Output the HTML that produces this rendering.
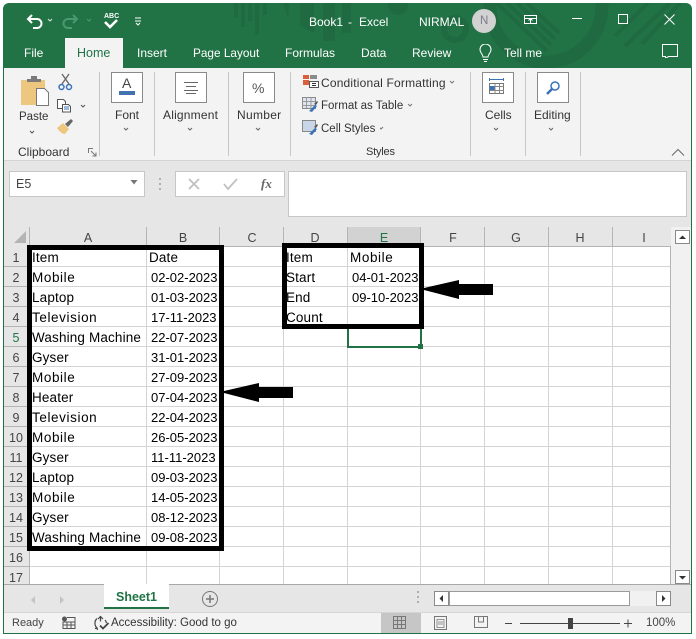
<!DOCTYPE html>
<html><head><meta charset="utf-8"><style>
html,body{margin:0;padding:0;background:#fff}
#r{position:relative;width:696px;height:639px;overflow:hidden;background:#fff;font-family:"Liberation Sans",sans-serif;font-size:12px;color:#333}
#r div,#r svg{position:absolute}
.t{white-space:nowrap;line-height:16px;height:16px}
.w{color:#fff}
.c{color:#000;font-size:13.5px;letter-spacing:.15px}
.d{color:#000;font-size:13px}
.m{letter-spacing:.6px}
.h{color:#444;font-size:12.5px;text-align:center;transform:translateX(-50%);line-height:16px;white-space:nowrap}
.b{background:#fff;border:1px solid #8a8a8a;box-sizing:border-box}
.s{width:1px;background:#c6c6c6;top:72px;height:84px}
</style></head><body><div id="r">

<div style="left:3px;top:3px;width:689px;height:631px;background:#217346;border-radius:6px 6px 6px 6px"></div>
<svg style="left:3px;top:3px" width="689" height="65" viewBox="3 3 689 65" fill="none">
<g fill="#1f6a41">
<rect x="234" y="3" width="4" height="15"/><rect x="241" y="3" width="4" height="24"/><rect x="248" y="3" width="4" height="18"/><rect x="255" y="3" width="4" height="32"/><rect x="263" y="3" width="4" height="12"/>
<path d="M283 3h6l-1 15zM300 3h14v30l-14-7z"/><rect x="323" y="3" width="12" height="38"/><rect x="342" y="3" width="9" height="30"/><circle cx="398" cy="5" r="10"/>
</g>
<g stroke="#1f6a41" fill="none">
<circle cx="455" cy="29" r="11" stroke-width="6"/><circle cx="546" cy="6" r="56" stroke-width="13"/>
<path d="M497 3l50 48M507 3l44 42M517 3l38 36M527 3l32 30M625 46l45-43M642 44l38-41M615 36l33-33" stroke-width="4"/>
</g>
</svg>

<!-- QAT -->
<svg style="left:22px;top:10px" width="130" height="24" viewBox="22 10 130 24" fill="none">
<path d="M28 19h9a4.500 4.500 0 0 1 0 9h-4M32 15l-4 4 4 4" stroke="#fff" stroke-width="2"/>
<path d="M48 19l2 2 2-2" stroke="#d7e6dd"/>
<path d="M77 19h-9a4.500 4.500 0 0 0 0 9h4M73 15l4 4-4 4" stroke="#4c9870" stroke-width="2"/>
<path d="M87 19l2 2 2-2" stroke="#4c9870"/>
<path d="M105 22l5 5 7-7" stroke="#fff" stroke-width="2.600"/>
<path d="M135 18h6M135 21h6M136 23l2 2 2-2" stroke="#fff"/>
</svg>
<div class="t w" style="left:104px;top:12px;font-size:7px;font-weight:bold;line-height:9px;height:9px">ABC</div>

<!-- Title -->
<div class="t w" style="left:309px;top:14px">Book1</div>
<div class="t w" style="left:348px;top:14px">-</div>
<div class="t w" style="left:359px;top:14px">Excel</div>
<div class="t w" style="left:419px;top:14px">NIRMAL</div>
<div style="left:472px;top:9px;width:24px;height:24px;border-radius:50%;background:#d2d2d2"></div>
<div class="t" style="left:480px;top:13px;color:#7a7a8a;font-size:11.5px">N</div>
<svg style="left:520px;top:12px" width="172" height="46" viewBox="520 12 172 46" fill="none" stroke="#fff">
<path d="M524.500 15.500h12v8h-12zM524.500 18.500h12M530.500 23v-4M528.500 20.500l2-2 2 2"/>
<path d="M572 18.500h10" stroke-width="1"/>
<rect x="618.500" y="14.500" width="9" height="9"/>
<path d="M664.500 14.500l10 10M674.500 14.500l-10 10"/>
<path d="M662.500 46.500h15v12h-9l-3 2v-2h-3z" transform="translate(0,-2)"/>
</svg>

<!-- Tabs -->
<div style="left:65px;top:38px;width:58px;height:30px;background:#f3f3f3"></div>
<div class="t w" style="left:24px;top:45px">File</div>
<div class="t" style="left:77px;top:45px;font-size:12.5px;color:#217346">Home</div>
<div class="t w" style="left:137px;top:45px">Insert</div>
<div class="t w" style="left:193px;top:45px;font-size:11.800px">Page Layout</div>
<div class="t w" style="left:285px;top:45px">Formulas</div>
<div class="t w" style="left:361px;top:45px">Data</div>
<div class="t w" style="left:412px;top:45px">Review</div>
<div class="t w" style="left:504px;top:45px">Tell me</div>
<svg style="left:476px;top:44px" width="18" height="20" viewBox="476 44 18 20" fill="none" stroke="#fff">
<path d="M483 57c0-3-3-4-3-7.500a5.500 5.500 0 0 1 11 0c0 3.500-3 4.500-3 7.500zM483 59.500h5M484 61.500h3"/>
</svg>

<!-- Ribbon -->
<div style="left:4px;top:68px;width:687px;height:92px;background:#f3f3f3"></div>
<div style="left:4px;top:160px;width:687px;height:1px;background:#d4d4d4"></div>
<div class="s" style="left:99px"></div><div class="s" style="left:154px"></div><div class="s" style="left:228px"></div><div class="s" style="left:290px"></div><div class="s" style="left:470px"></div><div class="s" style="left:525px"></div><div class="s" style="left:580px"></div>

<svg style="left:15px;top:72px" width="85" height="70" viewBox="15 72 85 70" fill="none">
<path d="M21 80h24v25H21z" fill="#edc77f"/>
<path d="M27 82v-3h4v-3h6v3h4v3z" fill="#7a7a7a"/>
<path d="M36.500 88.500h8l4 4v13h-12z" fill="#fff" stroke="#777"/>
<circle cx="61.500" cy="87" r="2.500" stroke="#3a73b8" stroke-width="1.500"/><circle cx="69" cy="87" r="2.500" stroke="#3a73b8" stroke-width="1.500"/>
<path d="M62 84l7-10M69 84l-7-10" stroke="#666" stroke-width="1.300"/>
<path d="M57.500 99.500h6l2 2v7h-8z" fill="#fff" stroke="#555"/><path d="M62.500 104.500h6l2 2v5.500h-8z" fill="#fff" stroke="#555"/><path d="M64 107h5M64 109h5" stroke="#3a73b8"/>
<path d="M57 128l6-5 6 6-4 5c-3 0-6-3-8-6z" fill="#edc77f"/><path d="M65 124l6-5 2 2-5 6z" fill="#666"/>
<path d="M81 105l2 2 2-2M30 131l2 2 2-2" stroke="#555"/>
</svg>
<div class="t" style="left:19px;top:109px;font-size:11.500px">Paste</div>
<div class="t" style="left:18px;top:144px">Clipboard</div>
<svg style="left:88px;top:148px" width="9" height="9" fill="none" stroke="#777"><path d="M.5 5V.5H5M3 3l5 5M8 4.500V8H4.500"/></svg>

<div class="b" style="left:111px;top:72px;width:32px;height:31px"></div>
<div class="t" style="left:122px;top:76px;font-size:14px;color:#444;height:14px;line-height:14px">A</div>
<div style="left:119px;top:91px;width:16px;height:4px;background:#4472b0"></div>
<div class="t" style="left:115px;top:107px">Font</div>

<div class="b" style="left:175px;top:72px;width:32px;height:31px"></div>
<svg style="left:183px;top:80px" width="16" height="14" stroke="#666" fill="none"><path d="M1 2.500h14M3 6.500h10M1 10.500h14M3 13.500h10"/></svg>
<div class="t" style="left:163px;top:107px;letter-spacing:.2px">Alignment</div>

<div class="b" style="left:243px;top:72px;width:32px;height:31px"></div>
<div class="t" style="left:252px;top:80px;font-size:14px;color:#555">%</div>
<div class="t" style="left:237px;top:107px;letter-spacing:.3px">Number</div>

<svg style="left:120px;top:126px" width="150" height="8" fill="none" stroke="#666"><path d="M4 2l2 2 2-2M68 2l2 2 2-2M136 2l2 2 2-2"/></svg>
<svg style="left:490px;top:126px" width="90" height="8" fill="none" stroke="#666"><path d="M4 2l2 2 2-2M59 2l2 2 2-2"/></svg>

<svg style="left:301px;top:73px" width="20" height="66" viewBox="301 73 20 66" fill="none">
<path d="M303 75h6v4h-6zM303 80h6v5h-6z" fill="#d9603a"/><path d="M310 75h7v4h-7z" fill="#8a8a8a"/>
<rect x="309.500" y="81.500" width="9" height="6" fill="#fff" stroke="#555"/><path d="M312 83.500h4M312 85.500h4" stroke="#333"/>
<path d="M302.500 97.500h13v11h-13z" fill="#dfe6f1" stroke="#888"/><path d="M302 101.500h13M302 105.500h13M306.500 97v11M311 97v11" stroke="#999"/><path d="M309 111l6-6 2 1-5 6z" fill="#3a73b8"/><path d="M314 104l3-3 1 1-2 3z" fill="#555"/>
<path d="M302.500 120.500h13v11h-13z" fill="#c9d6e8" stroke="#888"/><path d="M309 134l6-6 2 1-5 6z" fill="#3a73b8"/><path d="M314 127l3-3 1 1-2 3z" fill="#555"/>
</svg>
<div class="t" style="left:321px;top:75px;letter-spacing:.18px">Conditional Formatting</div>
<div class="t" style="left:321px;top:98px;font-size:11.500px">Format as Table</div>
<div class="t" style="left:321px;top:121px;font-size:11.500px">Cell Styles</div>
<svg style="left:380px;top:78px" width="80" height="56" fill="none" stroke="#777"><path d="M70 3l2 2 2-2M28 26l2 2 2-2M-1 49l2 2 2-2" /></svg>
<div class="t" style="left:366px;top:144px;font-size:11px;letter-spacing:-.2px">Styles</div>

<div class="b" style="left:482px;top:72px;width:32px;height:31px"></div>
<svg style="left:489px;top:78px" width="18" height="18" fill="none"><path d="M.500 1.500h14M.500 0v3M14.500 0v3" stroke="#3a73b8"/><rect x=".5" y="5.500" width="14" height="10" fill="#fff" stroke="#777"/><rect x="1" y="8" width="5" height="4" fill="#3a73b8"/><path d="M6 8.500h9M1 12.500h14M6 6v9M10.500 6v9" stroke="#888"/></svg>
<div class="t" style="left:485px;top:107px">Cells</div>

<div class="b" style="left:537px;top:72px;width:32px;height:31px"></div>
<svg style="left:545px;top:80px" width="16" height="16" fill="none" stroke="#3a73b8"><circle cx="10" cy="6" r="4" stroke-width="1.500"/><path d="M7 9l-5 5" stroke-width="2.500"/></svg>
<div class="t" style="left:534px;top:107px">Editing</div>
<svg style="left:670px;top:148px" width="16" height="9" fill="none" stroke="#666"><path d="M2 7.500l6-6 6 6"/></svg>

<!-- Formula area -->
<div style="left:4px;top:161px;width:687px;height:66px;background:#e6e6e6"></div>
<div style="left:9px;top:171px;width:136px;height:26px;background:#fff;border:1px solid #c6c6c6;box-sizing:border-box"></div>
<div class="t" style="left:16px;top:176px;font-size:12.5px;color:#444">E5</div>
<svg style="left:129px;top:180px" width="10" height="6"><path d="M1.500 0h7L5 4.500z" fill="#777"/></svg>
<svg style="left:158px;top:178px" width="4" height="14" fill="#b0b0b0"><rect width="2" height="2" x="1" y="0"/><rect width="2" height="2" x="1" y="5"/><rect width="2" height="2" x="1" y="10"/></svg>
<div style="left:175px;top:171px;width:110px;height:26px;background:#fff;border:1px solid #c6c6c6;box-sizing:border-box"></div>
<svg style="left:185px;top:176px" width="55" height="16" fill="none" stroke="#c0c0c0" stroke-width="1.800"><path d="M4 3l10 10M14 3L4 13M39 8l4 5 9-10"/></svg>
<div class="t" style="left:261px;top:176px;font-family:'Liberation Serif',serif;font-style:italic;font-weight:bold;font-size:13px;color:#666">fx</div>
<div style="left:288px;top:171px;width:399px;height:46px;background:#fff;border:1px solid #c6c6c6;box-sizing:border-box"></div>

<!-- Sheet -->
<div style="left:4px;top:227px;width:687px;height:20px;background:#e6e6e6"></div>
<div style="left:4px;top:247px;width:26px;height:337px;background:#e6e6e6"></div>
<div style="left:30px;top:247px;width:641px;height:337px;background:#fff"></div>
<div style="left:348px;top:227px;width:73px;height:20px;background:#d2d2d2"></div>
<svg style="left:4px;top:227px" width="667" height="357" viewBox="4 227 667 357" fill="none">
<path d="M26 231v12H14z" fill="#b4b4b4"/>
<path stroke="#d4d4d4" d="M146.500 247V584M219.500 247V584M283.500 247V584M347.500 247V584M420.500 247V584M484.500 247V584M548.500 247V584M612.500 247V584M30 266.500H671M30 286.500H671M30 306.500H671M30 326.500H671M30 346.500H671M30 366.500H671M30 386.500H671M30 406.500H671M30 426.500H671M30 446.500H671M30 466.500H671M30 486.500H671M30 506.500H671M30 526.500H671M30 546.500H671M30 566.500H671"/>
<path stroke="#b4b4b4" d="M29.500 227V584M146.500 227V247M219.500 227V247M283.500 227V247M347.500 227V247M420.500 227V247M484.500 227V247M548.500 227V247M612.500 227V247M29 246.500H671M4 266.500H30M4 286.500H30M4 306.500H30M4 326.500H30M4 346.500H30M4 366.500H30M4 386.500H30M4 406.500H30M4 426.500H30M4 446.500H30M4 466.500H30M4 486.500H30M4 506.500H30M4 526.500H30M4 546.500H30M4 566.500H30M670.500 247V584"/>
</svg>
<div class="h" style="left:88px;top:230px">A</div><div class="h" style="left:183px;top:230px">B</div><div class="h" style="left:252px;top:230px">C</div><div class="h" style="left:315px;top:230px">D</div><div class="h" style="left:384px;top:230px;color:#217346">E</div><div class="h" style="left:453px;top:230px">F</div><div class="h" style="left:516px;top:230px">G</div><div class="h" style="left:580px;top:230px">H</div><div class="h" style="left:644px;top:230px">I</div>
<div class="h" style="left:16px;top:250px">1</div><div class="h" style="left:16px;top:270px">2</div><div class="h" style="left:16px;top:290px">3</div><div class="h" style="left:16px;top:310px">4</div><div class="h" style="left:16px;top:330px;color:#217346">5</div><div class="h" style="left:16px;top:350px">6</div><div class="h" style="left:16px;top:370px">7</div><div class="h" style="left:16px;top:390px">8</div><div class="h" style="left:16px;top:410px">9</div><div class="h" style="left:16px;top:430px">10</div><div class="h" style="left:16px;top:450px">11</div><div class="h" style="left:16px;top:470px">12</div><div class="h" style="left:16px;top:490px">13</div><div class="h" style="left:16px;top:510px">14</div><div class="h" style="left:16px;top:530px">15</div><div class="h" style="left:16px;top:550px">16</div><div class="h" style="left:16px;top:570px">17</div>

<div class="t c" style="left:32px;top:250px">Item</div><div class="t c" style="left:149px;top:250px">Date</div>
<div class="t c m" style="left:32px;top:270px">Mobile</div><div class="t d" style="left:151px;top:270px">02-02-2023</div>
<div class="t c" style="left:32px;top:290px">Laptop</div><div class="t d" style="left:151px;top:290px">01-03-2023</div>
<div class="t c m" style="left:32px;top:310px">Television</div><div class="t d" style="left:151px;top:310px">17-11-2023</div>
<div class="t c" style="left:32px;top:330px">Washing Machine</div><div class="t d" style="left:151px;top:330px">22-07-2023</div>
<div class="t c" style="left:32px;top:350px">Gyser</div><div class="t d" style="left:151px;top:350px">31-01-2023</div>
<div class="t c m" style="left:32px;top:370px">Mobile</div><div class="t d" style="left:151px;top:370px">27-09-2023</div>
<div class="t c" style="left:32px;top:390px">Heater</div><div class="t d" style="left:151px;top:390px">07-04-2023</div>
<div class="t c m" style="left:32px;top:410px">Television</div><div class="t d" style="left:151px;top:410px">22-04-2023</div>
<div class="t c m" style="left:32px;top:430px">Mobile</div><div class="t d" style="left:151px;top:430px">26-05-2023</div>
<div class="t c" style="left:32px;top:450px">Gyser</div><div class="t d" style="left:151px;top:450px">11-11-2023</div>
<div class="t c" style="left:32px;top:470px">Laptop</div><div class="t d" style="left:151px;top:470px">09-03-2023</div>
<div class="t c m" style="left:32px;top:490px">Mobile</div><div class="t d" style="left:151px;top:490px">14-05-2023</div>
<div class="t c" style="left:32px;top:510px">Gyser</div><div class="t d" style="left:151px;top:510px">08-12-2023</div>
<div class="t c" style="left:32px;top:530px">Washing Machine</div><div class="t d" style="left:151px;top:530px">09-08-2023</div>

<div class="t c" style="left:286px;top:250px">Item</div><div class="t c m" style="left:350px;top:250px">Mobile</div>
<div class="t c" style="left:286px;top:270px">Start</div><div class="t d" style="left:352px;top:270px">04-01-2023</div>
<div class="t c" style="left:286px;top:290px">End</div><div class="t d" style="left:352px;top:290px">09-10-2023</div>
<div class="t c" style="left:286px;top:310px">Count</div>

<!-- Selection -->
<div style="left:347px;top:326px;width:75px;height:22px;border:2px solid #217346;box-sizing:border-box"></div>
<div style="left:418px;top:344px;width:5px;height:5px;background:#217346"></div>

<!-- Black annotation -->
<div style="left:27px;top:245px;width:197px;height:306px;border:5px solid #000;box-sizing:border-box"></div>
<div style="left:282px;top:243px;width:142px;height:86px;border:5px solid #000;box-sizing:border-box"></div>
<svg style="left:220px;top:278px" width="276" height="126" viewBox="220 278 276 126"><path d="M424 288v2l35 9v-4h34v-11h-34v-4z"/><path d="M224 391v2l35 9v-4h34v-11h-34v-4z"/></svg>

<!-- V scroll -->
<div style="left:671px;top:227px;width:20px;height:358px;background:#f1f1f1"></div>
<div style="left:675px;top:230px;width:15px;height:14px;background:#fff;border:1px solid #8a8a8a;box-sizing:border-box"></div>
<div style="left:675px;top:570px;width:15px;height:14px;background:#fff;border:1px solid #8a8a8a;box-sizing:border-box"></div>
<svg style="left:675px;top:230px" width="15" height="354"><path d="M4 9h7L7.500 5.500z" fill="#333"/><path d="M4 346h7l-3.500 3.500z" fill="#333"/></svg>

<!-- Sheet tabs -->
<div style="left:4px;top:584px;width:687px;height:29px;background:#e6e6e6;border-top:1px solid #a8a8a8;box-sizing:border-box"></div>
<div style="left:104px;top:584px;width:65px;height:25px;background:#fff;border-bottom:2px solid #217346;box-sizing:border-box"></div>
<div class="t" style="left:116px;top:589px;font-weight:bold;font-size:12.5px;color:#217346">Sheet1</div>
<svg style="left:25px;top:590px" width="200" height="18" fill="none"><path d="M10 6v8l-4-4zM35 6v8l4-4z" fill="#c4c4c4"/><circle cx="185" cy="9" r="7.500" stroke="#777"/><path d="M181 9h8M185 5v8" stroke="#777" stroke-width="1.500"/></svg>
<svg style="left:416px;top:591px" width="4" height="14" fill="#b0b0b0"><rect width="2" height="2" x="1" y="0"/><rect width="2" height="2" x="1" y="5"/><rect width="2" height="2" x="1" y="10"/></svg>
<div style="left:434px;top:591px;width:237px;height:15px;background:#f1f1f1"></div>
<div style="left:434px;top:591px;width:15px;height:15px;background:#fff;border:1px solid #8a8a8a;box-sizing:border-box"></div>
<div style="left:449px;top:591px;width:181px;height:15px;background:#fff;border:1px solid #9a9a9a;box-sizing:border-box"></div>
<div style="left:656px;top:591px;width:15px;height:15px;background:#fff;border:1px solid #8a8a8a;box-sizing:border-box"></div>
<svg style="left:434px;top:591px" width="237" height="15"><path d="M9 4v7L5.500 7.500zM228 4v7l3.500-3.500z" fill="#333"/></svg>

<!-- Status -->
<div style="left:4px;top:613px;width:687px;height:21px;background:#f3f3f3"></div>
<div style="left:4px;top:612px;width:687px;height:1px;background:#d6d6d6"></div>
<div class="t" style="left:12px;top:615px;font-size:11px;color:#444">Ready</div>
<svg style="left:62px;top:616px" width="14" height="14" fill="none"><circle cx="2.500" cy="3" r="2.500" fill="#555"/><path d="M5 1.500h8v11H1V6h12M1 9h12M5 6v7M9 6v7" stroke="#555"/></svg>
<svg style="left:92px;top:615px" width="18" height="17" fill="none" stroke="#444" stroke-width="1.200"><path d="M5 3.500a6.500 6.500 0 0 0 0 9.500M3 13.500l2-.5.500 2M8.500 1.500v5M6 4l2.500-2.500L11 4M13 5a6 6 0 0 1 1.500 3" /><path d="M8 10.500l3 3 5.500-5.500" stroke-width="1.800"/></svg>
<div class="t" style="left:111px;top:615px;font-size:11.500px;color:#333">Accessibility: Good to go</div>
<div style="left:381px;top:613px;width:40px;height:21px;background:#c6c6c6"></div>
<svg style="left:392px;top:615px" width="100" height="17" fill="none" stroke="#777"><path d="M1.500 1.500h12v12h-12zM1.500 5.500h12M1.500 9.500h12M5.500 1.500v12M9.500 1.500v12" /><path d="M42.500 1.500h12v13h-12z"/><path d="M45 4.500h7v8h-7zM46 7h5M46 9h5" stroke-width=".8"/><path d="M82.500 1.500h13v11h-13zM86.500 1.500v5.500h5V1.500"/></svg>
<svg style="left:505px;top:617px" width="130" height="13" fill="none" stroke="#444"><path d="M0 6.500h7M15 6.500h100M119 6.500h8M123 2.500v8" /><rect x="63" y="1" width="5" height="11" fill="#444" stroke="none"/></svg>
<div class="t" style="left:646px;top:615px;font-size:11.500px;color:#444">100%</div>

<!-- Window edges -->
<div style="left:3px;top:68px;width:1px;height:566px;background:#217346"></div>
<div style="left:691px;top:68px;width:1px;height:566px;background:#217346"></div>
<div style="left:3px;top:633px;width:689px;height:1px;background:#217346"></div>
</div></body></html>
